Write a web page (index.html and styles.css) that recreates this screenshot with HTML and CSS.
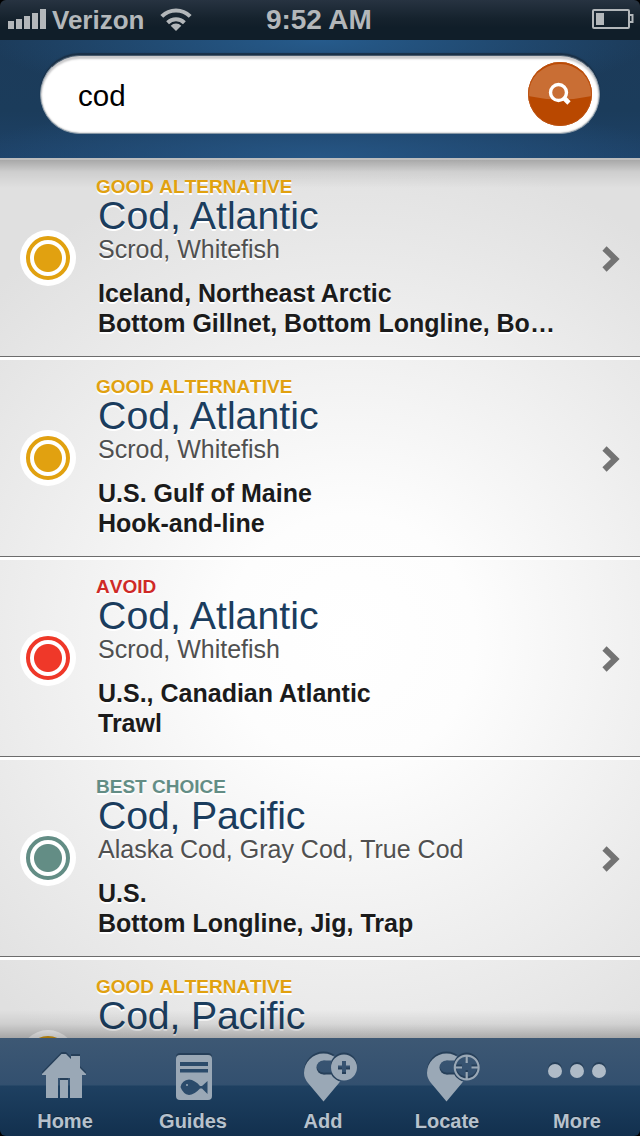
FILE: index.html
```html
<!DOCTYPE html>
<html lang="en">
<head>
<meta charset="utf-8">
<title>Seafood Search</title>
<link rel="stylesheet" href="styles.css">
</head>
<body>
<div class="screen">
  <div class="status">
    <div class="carrier">
      <svg class="signal" width="38" height="20" viewBox="0 0 38 20"><path d="M0 12h6v8H0zM8 10h6v10H8zM16 7h6v13h-6zM24 4h6v16h-6zM32 0h6v20h-6z"/></svg>
      <span>Verizon</span>
      <svg class="wifi" width="32" height="24" viewBox="0 0 32 24"><g fill="none" stroke="#b3b7ba" stroke-width="4"><path d="M1.8 8.300a20 20 0 0 1 28.400 0"/><path d="M7.600 14.800a12 12 0 0 1 16.800 0"/></g><path d="M16 23l-5.300-5.200a7.500 7.500 0 0 1 10.600 0z"/></svg>
    </div>
    <div class="time">9:52 AM</div>
    <svg class="battery" width="42" height="20" viewBox="0 0 42 20"><rect x="1" y="1" width="36" height="18" rx="1" fill="none" stroke="#b3b7ba" stroke-width="2"/><path d="M4 4h8v12H4z"/><path d="M38 6h2.500v7H38" fill="none" stroke="#b3b7ba" stroke-width="2"/></svg>
  </div>

  <div class="header">
    <div class="search">
      <span class="query">cod</span>
      <svg width="64" height="64" viewBox="0 0 64 64"><circle cx="32" cy="32" r="32" fill="#b94800"/><path d="M0 34a32 32 0 0 1 64 0Q32 41 0 34z" fill="#c96e34"/><circle cx="32" cy="32" r="31.500" fill="none" stroke="#bd5312"/><circle cx="30.500" cy="30.500" r="8" fill="none" stroke="#fff" stroke-width="3.400"/><path d="M36 36l5 5" stroke="#fff" stroke-width="4.600"/></svg>
    </div>
  </div>

  <div class="list">
    <div class="row good">
      <div class="mark"><i></i></div>
      <div class="info"><div class="tag">GOOD ALTERNATIVE</div><div class="name">Cod, Atlantic</div><div class="aka">Scrod, Whitefish</div><div class="source">Iceland, Northeast Arctic</div><div class="source">Bottom Gillnet, Bottom Longline, Bo…</div></div>
      <svg class="chevron" width="18" height="26" viewBox="0 0 18 26"><path d="M2.500 2.500L13.300 13 2.500 23.500"/></svg>
    </div>
    <div class="row good">
      <div class="mark"><i></i></div>
      <div class="info"><div class="tag">GOOD ALTERNATIVE</div><div class="name">Cod, Atlantic</div><div class="aka">Scrod, Whitefish</div><div class="source">U.S. Gulf of Maine</div><div class="source">Hook-and-line</div></div>
      <svg class="chevron" width="18" height="26" viewBox="0 0 18 26"><path d="M2.500 2.500L13.300 13 2.500 23.500"/></svg>
    </div>
    <div class="row avoid">
      <div class="mark"><i></i></div>
      <div class="info"><div class="tag">AVOID</div><div class="name">Cod, Atlantic</div><div class="aka">Scrod, Whitefish</div><div class="source">U.S., Canadian Atlantic</div><div class="source">Trawl</div></div>
      <svg class="chevron" width="18" height="26" viewBox="0 0 18 26"><path d="M2.500 2.500L13.300 13 2.500 23.500"/></svg>
    </div>
    <div class="row best">
      <div class="mark"><i></i></div>
      <div class="info"><div class="tag">BEST CHOICE</div><div class="name pacific">Cod, Pacific</div><div class="aka">Alaska Cod, Gray Cod, True Cod</div><div class="source">U.S.</div><div class="source">Bottom Longline, Jig, Trap</div></div>
      <svg class="chevron" width="18" height="26" viewBox="0 0 18 26"><path d="M2.500 2.500L13.300 13 2.500 23.500"/></svg>
    </div>
    <div class="row good">
      <div class="mark"><i></i></div>
      <div class="info"><div class="tag">GOOD ALTERNATIVE</div><div class="name pacific">Cod, Pacific</div></div>
    </div>
  </div>

  <div class="tabs">
    <div class="tab"><svg width="60" height="52" viewBox="0 0 60 52"><path d="M26.500 4h4.500l5 5V6h9v12l6 6v1h-4v23H35V28H23v20H11V25H7v-1z"/><path d="M25 30h8v18h-8z"/></svg><span>Home</span></div>
    <div class="tab"><svg width="60" height="52" viewBox="0 0 60 52"><rect x="13" y="5" width="36" height="45" rx="4"/><path d="M17 12h28v4H17zM17 19h28v3.500H17zM17.500 37Q19 30 26 29.500 32 30 37 36h2l5.500-5v13L39 38.500h-2Q31 45 26 45 20 44 17.500 37z" fill="#2b4b6b"/><circle cx="24" cy="35" r="1"/></svg><span>Guides</span></div>
    <div class="tab add"><svg width="60" height="52" viewBox="0 0 60 52"><mask id="pin-cut"><path fill="#fff" d="M0 0h60v52H0z"/><g fill="#000"><circle cx="45" cy="17.500" r="14.500"/><circle cx="24.500" cy="17.500" r="7"/><path d="M24.500 10.500h8v14h-8z"/></g></mask><g mask="url(#pin-cut)"><path id="pin" d="M24.500 51.500L9 33Q5 28 5 23A19.500 19.500 0 0 1 24.500 3.500 19.500 19.500 0 0 1 44 23Q44 28 40 33z"/></g><path fill-rule="evenodd" d="M32 17.500a13 13 0 1 0 26 0 13 13 0 1 0-26 0zm11-6.500h4v4.500h4v4h-4V24h-4v-4.500h-4v-4h4z"/></svg><span>Add</span></div>
    <div class="tab locate"><svg width="60" height="52" viewBox="0 0 60 52"><g mask="url(#pin-cut)"><use href="#pin"/></g><g fill="none" stroke="#9aa8b6" stroke-width="2.200"><circle cx="44.700" cy="17.500" r="11.900"/><path d="M44.700 6v7M44.700 22v7M33 17.500h7M49.500 17.500h7"/></g></svg><span>Locate</span></div>
    <div class="tab"><svg class="dots" width="60" height="52" viewBox="0 0 60 52"><circle cx="8" cy="21" r="7"/><circle cx="30" cy="21" r="7"/><circle cx="52" cy="21" r="7"/></svg><span>More</span></div>
  </div>
</div>
</body>
</html>
```
FILE: styles.css
```css
body {
  margin: 0;
  background: #000;
  font-family: "Liberation Sans", Arial, sans-serif;
}

.screen {
  width: 640px;
  height: 1136px;
  display: flex;
  flex-direction: column;
  overflow: hidden;
  border-radius: 6px;
}

.status {
  box-sizing: border-box;
  height: 40px;
  flex: none;
  display: grid;
  grid-template-columns: 258px 1fr 50px;
  padding-left: 8px;
  background: linear-gradient(#273341, #16232e 45%, #101e29 70%, #101e29);
  color: #b3b7ba;
  font-weight: bold;
}

.status svg {
  fill: #b3b7ba;
}

.carrier {
  display: flex;
  font-size: 26px;
  line-height: 40px;
}

.carrier span {
  margin: 0 0 0 6px;
  width: 108px;
}

.signal {
  margin-top: 9px;
}

.wifi {
  margin-top: 8px;
}

.time {
  font-size: 28px;
  line-height: 39px;
  letter-spacing: -0.1px;
}

.battery {
  margin: 9px 0 0 2px;
  justify-self: start;
}

.header {
  box-sizing: border-box;
  height: 120px;
  flex: none;
  padding: 15px 40px 0;
  border-bottom: 2px solid #bdbdbd;
  background:
    radial-gradient(ellipse 330px 65px at 50% 0, #265b8c, rgba(38, 91, 140, 0)),
    radial-gradient(ellipse 360px 55px at 50% 100%, #265685, rgba(38, 86, 133, 0)),
    linear-gradient(#1c3b5a, #1b3c5b 60%, #1e4268);
}

.search {
  box-sizing: border-box;
  height: 79px;
  padding: 6px 7px 0 37px;
  display: flex;
  justify-content: space-between;
  border-radius: 40px;
  background: #fff;
  border: 1px solid #8898a6;
  border-top-color: #475a6c;
  box-shadow: inset 0 3px 2px #c9c9cb, inset 0 0 2px #999, 0 -2px 1px #1a3046;
}

.query {
  font-size: 29.500px;
  line-height: 68px;
  color: #000;
}

.list {
  flex: 1;
  min-height: 0;
  overflow: hidden;
  background:
    linear-gradient(rgba(0, 0, 0, 0.25), rgba(0, 0, 0, 0.08) 12px, rgba(0, 0, 0, 0) 28px),
    radial-gradient(circle 500px at 350px 480px, #fff, #fdfdfd 25%, #e0e0e0);
  position: relative;
}

.list::after {
  content: "";
  position: absolute;
  left: 0;
  right: 0;
  bottom: 0;
  height: 28px;
  background: linear-gradient(rgba(0, 0, 0, 0), rgba(0, 0, 0, 0.08) 50%, rgba(0, 0, 0, 0.26));
}

.row {
  box-sizing: border-box;
  height: 200px;
  display: grid;
  grid-template-columns: 98px 1fr 38px;
  border-bottom: 3px solid #fff;
  box-shadow: inset 0 -1px #6c6c6c;
}

.mark {
  box-sizing: border-box;
  width: 56px;
  height: 56px;
  margin: 70px 0 0 20px;
  padding: 6px;
  border-radius: 50%;
  background: #fff;
}

.mark i {
  box-sizing: border-box;
  display: block;
  width: 44px;
  height: 44px;
  border-radius: 50%;
  border: 4px solid var(--rating);
  background: radial-gradient(circle, var(--rating) 13.500px, #fff 14.500px);
}

.good { --rating: #e1a110; }
.avoid { --rating: #ef3829; --label: #cf2a27; }
.best { --rating: #638d85; }

.info {
  padding-top: 17px;
  white-space: nowrap;
  text-shadow: 0 2px #fff;
}

.tag {
  margin-left: -2px;
  font-size: 19px;
  line-height: 20px;
  font-weight: bold;
  font-kerning: none;
  color: var(--label, var(--rating));
}

.name {
  font-size: 39.300px;
  line-height: 36px;
  color: #1b3d5e;
}

.pacific {
  letter-spacing: -0.200px;
}

.aka {
  margin: 1px 0 14px;
  font-size: 25px;
  line-height: 30px;
  color: #505050;
}

.source {
  font-size: 25px;
  line-height: 30px;
  font-weight: bold;
  color: #1b1b1b;
}

.chevron {
  margin-top: 86px;
  fill: none;
  stroke: #737373;
  stroke-width: 6;
}

.tabs {
  box-sizing: border-box;
  height: 98px;
  flex: none;
  display: grid;
  grid-template-columns: repeat(5, 128px);
  padding: 12px 0 0 1px;
  background: linear-gradient(#3d5874, #33506f 46px, #31506f 47px, #1e4061 48px, #12304e 98px);
}

.tab {
  display: flex;
  flex-direction: column;
  align-items: center;
  font-size: 20px;
  line-height: 24px;
  font-weight: bold;
  color: #b7c2cd;
  text-shadow: 0 -1px #15283b;
}

.tab svg {
  fill: #9aa8b6;
  margin-bottom: 7px;
  filter: drop-shadow(0 -2px 0 #263f59);
}

.tab .dots {
  fill: #afbbc7;
}

.add {
  padding-left: 4px;
}

.add svg {
  margin-left: 12px;
}

.locate {
  padding-right: 4px;
}

.locate svg {
  margin-left: 10px;
}
```
